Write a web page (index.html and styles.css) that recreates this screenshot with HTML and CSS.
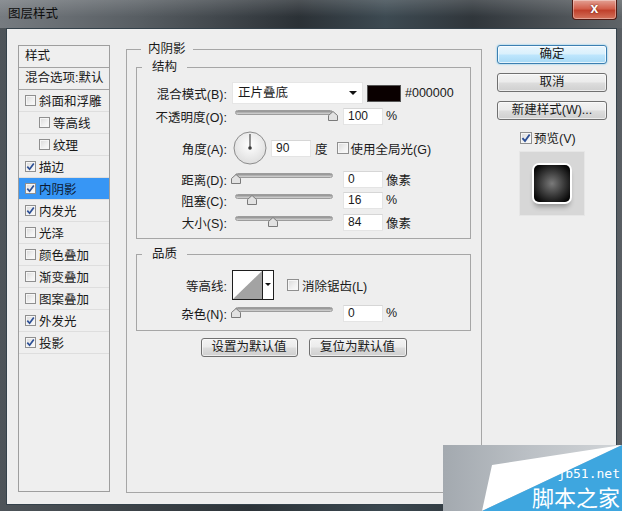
FILE: index.html
```html
<!DOCTYPE html>
<html>
<head>
    <title>图层样式</title>
    <link rel="stylesheet" href="styles.css">
</head>
<body>
    <div class="titlebar">
        <span class="title">图层样式</span>
        <span class="close-btn">x</span>
    </div>

    <div class="client">
        <!-- left style list -->
        <div class="style-list">
            <div class="list-head">样式</div>
            <div class="list-head">混合选项:默认</div>
            <div class="list-item"><span class="cb"></span>斜面和浮雕</div>
            <div class="list-item sub"><span class="cb"></span>等高线</div>
            <div class="list-item sub"><span class="cb"></span>纹理</div>
            <div class="list-item"><span class="cb checked"><svg viewBox="0 0 9 9"><path d="M1.3 4.6 L3.6 7.2 L7.8 1.4"/></svg></span>描边</div>
            <div class="list-item active"><span class="cb checked"><svg viewBox="0 0 9 9"><path d="M1.3 4.6 L3.6 7.2 L7.8 1.4"/></svg></span>内阴影</div>
            <div class="list-item"><span class="cb checked"><svg viewBox="0 0 9 9"><path d="M1.3 4.6 L3.6 7.2 L7.8 1.4"/></svg></span>内发光</div>
            <div class="list-item"><span class="cb"></span>光泽</div>
            <div class="list-item"><span class="cb"></span>颜色叠加</div>
            <div class="list-item"><span class="cb"></span>渐变叠加</div>
            <div class="list-item"><span class="cb"></span>图案叠加</div>
            <div class="list-item"><span class="cb checked"><svg viewBox="0 0 9 9"><path d="M1.3 4.6 L3.6 7.2 L7.8 1.4"/></svg></span>外发光</div>
            <div class="list-item"><span class="cb checked"><svg viewBox="0 0 9 9"><path d="M1.3 4.6 L3.6 7.2 L7.8 1.4"/></svg></span>投影</div>
        </div>

        <!-- settings -->
        <div class="main">
            <fieldset class="group outer">
                <legend>内阴影</legend>

                <fieldset class="group structure">
                    <legend>结构</legend>
                    <div class="row row-blend">
                        <span class="label">混合模式(B):</span>
                        <div class="select">正片叠底<span class="arrow"></span></div>
                        <span class="swatch"></span>
                        <span class="hex">#000000</span>
                    </div>
                    <div class="row row-opacity">
                        <span class="label">不透明度(O):</span>
                        <div class="slider"><span class="track"></span><svg class="thumb" style="left: 93px" viewBox="0 0 10 10"><polygon points="0.5,9.5 0.5,4.5 5,0.5 9.5,4.5 9.5,9.5"/></svg></div>
                        <span class="num">100</span>
                        <span class="unit">%</span>
                    </div>
                    <div class="row row-angle">
                        <span class="label">角度(A):</span>
                        <svg class="dial" viewBox="0 0 34 34">
                            <defs>
                                <radialGradient id="dialFill" cx="50%" cy="40%" r="60%">
                                    <stop offset="0" stop-color="#ffffff"/>
                                    <stop offset="1" stop-color="#dedede"/>
                                </radialGradient>
                            </defs>
                            <circle cx="17" cy="17" r="16" fill="url(#dialFill)" stroke="#8c8c8c"/>
                            <line x1="17" y1="17" x2="17" y2="3" stroke="#4a4a4a" stroke-width="1.2"/>
                            <circle cx="17" cy="17" r="1.8" fill="#3a3a3a"/>
                        </svg>
                        <span class="num num-angle">90</span>
                        <span class="unit">度</span>
                        <span class="cb cb-global"></span>
                        <span class="cb-text">使用全局光(G)</span>
                    </div>
                    <div class="row row-dist">
                        <span class="label">距离(D):</span>
                        <div class="slider"><span class="track"></span><svg class="thumb" style="left: -4px" viewBox="0 0 10 10"><polygon points="0.5,9.5 0.5,4.5 5,0.5 9.5,4.5 9.5,9.5"/></svg></div>
                        <span class="num">0</span>
                        <span class="unit">像素</span>
                    </div>
                    <div class="row row-choke">
                        <span class="label">阻塞(C):</span>
                        <div class="slider"><span class="track"></span><svg class="thumb" style="left: 12px" viewBox="0 0 10 10"><polygon points="0.5,9.5 0.5,4.5 5,0.5 9.5,4.5 9.5,9.5"/></svg></div>
                        <span class="num">16</span>
                        <span class="unit">%</span>
                    </div>
                    <div class="row row-size">
                        <span class="label">大小(S):</span>
                        <div class="slider"><span class="track"></span><svg class="thumb" style="left: 33px" viewBox="0 0 10 10"><polygon points="0.5,9.5 0.5,4.5 5,0.5 9.5,4.5 9.5,9.5"/></svg></div>
                        <span class="num">84</span>
                        <span class="unit">像素</span>
                    </div>
                </fieldset>

                <fieldset class="group quality">
                    <legend>品质</legend>
                    <div class="row row-contour">
                        <span class="label">等高线:</span>
                        <div class="contour">
                            <svg class="curve" viewBox="0 0 29 28"><polygon points="0,28 29,0 29,28" fill="#a3a3a3"/></svg>
                            <span class="contour-drop"><span class="arrow small"></span></span>
                        </div>
                        <span class="cb cb-anti"></span>
                        <span class="cb-text">消除锯齿(L)</span>
                    </div>
                    <div class="row row-noise">
                        <span class="label">杂色(N):</span>
                        <div class="slider"><span class="track"></span><svg class="thumb" style="left: -4px" viewBox="0 0 10 10"><polygon points="0.5,9.5 0.5,4.5 5,0.5 9.5,4.5 9.5,9.5"/></svg></div>
                        <span class="num">0</span>
                        <span class="unit">%</span>
                    </div>
                </fieldset>

                <div class="default-row">
                    <span class="btn btn-set">设置为默认值</span>
                    <span class="btn btn-reset">复位为默认值</span>
                </div>
            </fieldset>
        </div>

        <!-- right buttons -->
        <div class="side">
            <span class="btn btn-ok">确定</span>
            <span class="btn">取消</span>
            <span class="btn">新建样式(W)...</span>
            <div class="preview-check">
                <span class="cb checked"><svg viewBox="0 0 9 9"><path d="M1.3 4.6 L3.6 7.2 L7.8 1.4"/></svg></span>
                <span>预览(V)</span>
            </div>
            <div class="preview">
                <span class="preview-shape"></span>
            </div>
        </div>
    </div>

    <div class="watermark">
        <svg class="wm-shape" viewBox="0 0 179 66" preserveAspectRatio="none">
            <polygon points="49,20 179,0 39,66" fill="#ffffff"/>
            <polygon points="39,66 179,0 179,66" fill="#3ea6df"/>
        </svg>
        <span class="wm-url">jb51.net</span>
        <span class="wm-name">脚本之家</span>
    </div>
</body>
</html>
```

FILE: styles.css
```css
body {
    margin: 0;
    width: 622px;
    height: 511px;
    overflow: hidden;
    position: relative;
    font-family: "Liberation Sans", "Noto Sans CJK SC", sans-serif;
    font-size: 12.5px;
    color: #1a1a1a;
    background: linear-gradient(to right, #4e5459 0%, #2c3338 40%, #3b4850 62%, #2f363b 78%, #595e63 100%);
}

.titlebar {
    height: 28px;
    display: flex;
    justify-content: space-between;
    align-items: flex-start;
    background:
        linear-gradient(to bottom, rgba(255, 255, 255, 0.16), rgba(255, 255, 255, 0) 60%),
        linear-gradient(to right, #767b80 0%, #585e63 22%, #2b3136 48%, #3d4a52 62%, #30363b 76%, #5f6468 100%);
}

.title {
    margin: 6px 0 0 8px;
    line-height: 16px;
    color: #0c0c0c;
}

.close-btn {
    width: 43px;
    height: 19px;
    margin-right: 5px;
    border: 1px solid #4f1a13;
    border-top: none;
    border-radius: 0 0 4px 4px;
    background: linear-gradient(to bottom, #e3a194 0%, #d2604c 45%, #c0412c 55%, #d4735c 100%);
    box-shadow: inset 0 0 0 1px rgba(255, 255, 255, 0.35);
    color: #fff;
    font-weight: bold;
    font-size: 14px;
    line-height: 17px;
    text-align: center;
    text-shadow: 0 0 2px #5a1a10;
}

.client {
    margin: 0 5px 0 6px;
    height: 477px;
    box-sizing: border-box;
    border: 1px solid #34414a;
    background-color: #eeeeee;
    display: flex;
    align-items: flex-start;
    padding-left: 11px;
}

/* left list */
.style-list {
    width: 92px;
    height: 447px;
    box-sizing: border-box;
    margin-top: 16px;
    border: 1px solid #9e9e9e;
    background-color: #efefef;
}

.list-head {
    height: 21px;
    line-height: 21px;
    padding-left: 6px;
    border-bottom: 1px solid #a3a3a3;
    white-space: nowrap;
}

.list-item {
    height: 21px;
    display: flex;
    align-items: center;
    padding-left: 6px;
    border-bottom: 1px solid #dedede;
    white-space: nowrap;
}

.list-item.sub {
    padding-left: 20px;
}

.list-item.active {
    background-color: #3796f5;
    color: #0d1a33;
}

.list-item .cb {
    margin-right: 3px;
    width: 11px;
    height: 11px;
}

/* checkbox */
.cb {
    display: inline-block;
    flex-shrink: 0;
    width: 12px;
    height: 12px;
    box-sizing: border-box;
    border: 1px solid #8f8f8f;
    background: linear-gradient(135deg, #d9d9d9 0%, #f1f1f1 60%, #fbfbfb 100%);
    box-shadow: inset 0 0 0 1px #f6f6f6;
    position: relative;
}

.cb svg {
    position: absolute;
    left: 0;
    top: 0;
    width: 100%;
    height: 100%;
}

.cb svg path {
    fill: none;
    stroke: #2c4f95;
    stroke-width: 1.7;
}

/* group boxes */
.main {
    margin: 12px 0 0 16px;
    width: 356px;
}

.group {
    margin: 0;
    min-width: 0;
    border: 1px solid #a6a6a6;
    padding: 0;
}

.group legend {
    padding: 0 10px;
    margin-left: 5px;
    line-height: 16px;
}

.outer {
    height: 452px;
    box-sizing: border-box;
    padding: 2px 10px 0 9px;
}

.outer > legend {
    padding: 0 7px;
}

.structure {
    padding: 7px 0 7px 0;
}

.quality {
    margin-top: 7px;
    padding: 8px 0 8px 0;
}

.row {
    display: flex;
    align-items: center;
    height: 18px;
    white-space: nowrap;
}

.row .label {
    width: 90px;
    text-align: right;
}

.row-blend { height: 22px; }
.row-opacity { margin-top: 3px; }
.row-angle { margin-top: 6px; height: 34px; }
.row-dist { margin-top: 5px; }
.row-choke { margin-top: 3px; }
.row-size { margin-top: 4px; }
.row-contour { height: 30px; }
.row-noise { margin-top: 4px; }

.select {
    margin-left: 5px;
    width: 131px;
    height: 22px;
    box-sizing: border-box;
    background-color: #fff;
    border: 1px solid #e6e6e6;
    padding-left: 5px;
    line-height: 20px;
    display: flex;
    align-items: center;
    justify-content: space-between;
    padding-right: 5px;
}

.arrow {
    width: 0;
    height: 0;
    border-left: 4px solid transparent;
    border-right: 4px solid transparent;
    border-top: 4px solid #111;
}

.arrow.small {
    border-left-width: 3px;
    border-right-width: 3px;
    border-top-width: 3px;
}

.swatch {
    margin-left: 4px;
    width: 34px;
    height: 17px;
    box-sizing: border-box;
    background-color: #0a0000;
    border: 1px solid #555;
}

.hex {
    margin-left: 4px;
}

.slider {
    position: relative;
    margin-left: 8px;
    width: 98px;
    height: 18px;
}

.slider .track {
    display: block;
    margin-top: 3px;
    height: 5px;
    box-sizing: border-box;
    border: 1px solid #9c9c9c;
    border-radius: 3px;
    background: linear-gradient(to bottom, #8e8e8e, #d6d6d6);
}

.slider .thumb {
    position: absolute;
    top: 4px;
    width: 10px;
    height: 10px;
}

.thumb polygon {
    fill: #e2e2e2;
    stroke: #7a7a7a;
    stroke-width: 1;
}

.num {
    margin-left: 10px;
    width: 40px;
    height: 17px;
    box-sizing: border-box;
    background-color: #fff;
    border: 1px solid #e4e4e4;
    border-top-color: #d6d6d6;
    padding-left: 4px;
    font-size: 12px;
    line-height: 15px;
}

.unit {
    margin-left: 3px;
}

.dial {
    margin-left: 6px;
    width: 34px;
    height: 34px;
}

.num-angle {
    margin-left: 4px;
}

.row-angle .unit {
    margin-left: 4px;
}

.cb-global {
    margin-left: 9px;
}

.cb-text {
    margin-left: 2px;
}

.contour {
    margin-left: 5px;
    width: 42px;
    height: 30px;
    box-sizing: border-box;
    border: 1px solid #1e1e1e;
    display: flex;
    background-color: #fff;
}

.contour .curve {
    width: 29px;
    height: 28px;
}

.contour-drop {
    flex: 1;
    border-left: 1px solid #1e1e1e;
    display: flex;
    justify-content: center;
    padding-top: 12px;
    box-sizing: border-box;
}

.cb-anti {
    margin-left: 13px;
}

.row-contour .cb-text {
    margin-left: 3px;
}

/* buttons */
.btn {
    display: block;
    height: 19px;
    box-sizing: border-box;
    border: 1px solid #707070;
    border-radius: 3px;
    background: linear-gradient(to bottom, #f3f3f3 0%, #ebebeb 48%, #dddddd 52%, #cfcfcf 100%);
    box-shadow: inset 0 0 0 1px rgba(255, 255, 255, 0.6);
    text-align: center;
    line-height: 17px;
    white-space: nowrap;
}

.default-row {
    margin-top: 7px;
    display: flex;
    justify-content: center;
    gap: 11px;
}

.btn-set {
    width: 97px;
}

.btn-reset {
    width: 98px;
}

.side {
    margin: 16px 0 0 15px;
    width: 110px;
    display: flex;
    flex-direction: column;
}

.side .btn + .btn {
    margin-top: 9px;
}

.btn-ok {
    border-color: #3c7fb1;
    background: linear-gradient(to bottom, #eaf6fd 0%, #d9f0fc 48%, #bee6fd 52%, #a7d9f5 100%);
    box-shadow: 0 0 2px #5fc3ee, inset 0 0 0 1px rgba(255, 255, 255, 0.7);
}

.preview-check {
    margin: 11px 0 0 23px;
    display: flex;
    align-items: center;
    height: 13px;
    gap: 2px;
}

.preview {
    margin: 7px 0 0 22px;
    width: 66px;
    height: 65px;
    box-sizing: border-box;
    border: 1px solid #e6e6e6;
    background-color: #d7d7d7;
    display: flex;
    justify-content: center;
    padding-top: 13px;
}

.preview-shape {
    width: 36px;
    height: 37px;
    border-radius: 5px;
    background: radial-gradient(circle at 50% 50%, #7a7a7a 0%, #363636 50%, #020202 90%);
    box-shadow: 0 0 0 2px #ffffff, 0 5px 5px rgba(0, 0, 0, 0.3);
}

/* watermark overlay */
.watermark {
    position: absolute;
    right: 0;
    bottom: 0;
    width: 179px;
    height: 66px;
    background: linear-gradient(to right, #a3a9af 0%, #bcc1c6 50%, #d2d5d8 100%);
}

.wm-shape {
    position: absolute;
    left: 0;
    top: 0;
    width: 179px;
    height: 66px;
}

.wm-url {
    position: absolute;
    right: 2px;
    top: 22px;
    color: #fff;
    font-family: "DejaVu Sans Mono", monospace;
    font-size: 13px;
    line-height: 14px;
}

.wm-name {
    position: absolute;
    right: 2px;
    top: 40px;
    color: #fff;
    font-family: "Noto Sans CJK SC", sans-serif;
    font-size: 22px;
    line-height: 22px;
}
```
